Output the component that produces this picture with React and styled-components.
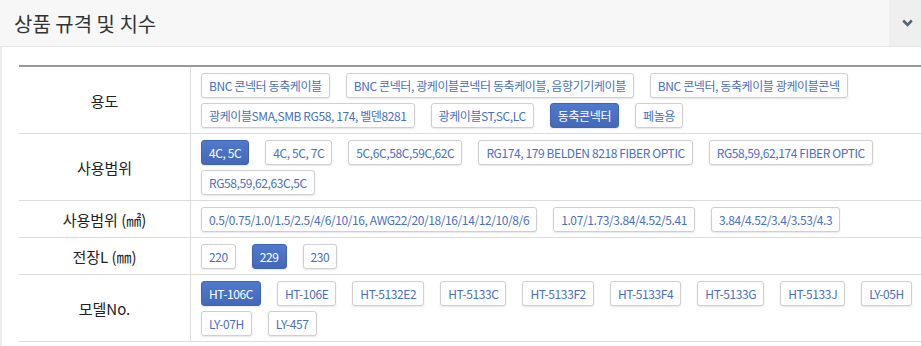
import React from 'react'
import styled, { createGlobalStyle } from 'styled-components'

const specs = [
  {
    label: '용도',
    options: [
      'BNC 콘넥터 동축케이블',
      'BNC 콘넥터, 광케이블콘넥터 동축케이블, 음향기기케이블',
      'BNC 콘넥터, 동축케이블 광케이블콘넥',
      '광케이블SMA,SMB RG58, 174, 벨덴8281',
      '광케이블ST,SC,LC',
      '동축콘넥터',
      '페놀용'
    ],
    active: '동축콘넥터'
  },
  {
    label: '사용범위',
    options: [
      '4C, 5C',
      '4C, 5C, 7C',
      '5C,6C,58C,59C,62C',
      'RG174, 179 BELDEN 8218 FIBER OPTIC',
      'RG58,59,62,174 FIBER OPTIC',
      'RG58,59,62,63C,5C'
    ],
    active: '4C, 5C'
  },
  {
    label: '사용범위 (㎟)',
    options: [
      '0.5/0.75/1.0/1.5/2.5/4/6/10/16, AWG22/20/18/16/14/12/10/8/6',
      '1.07/1.73/3.84/4.52/5.41',
      '3.84/4.52/3.4/3.53/4.3'
    ]
  },
  {
    label: '전장L (㎜)',
    options: ['220', '229', '230'],
    active: '229'
  },
  {
    label: '모델No.',
    options: [
      'HT-106C',
      'HT-106E',
      'HT-5132E2',
      'HT-5133C',
      'HT-5133F2',
      'HT-5133F4',
      'HT-5133G',
      'HT-5133J',
      'LY-05H',
      'LY-07H',
      'LY-457'
    ],
    active: 'HT-106C'
  }
]

const App = () => (
  <>
    <GlobalStyle />
    <Header>
      <Title>상품 규격 및 치수</Title>
      <Toggle>
        <svg width="11" height="8" viewBox="0 0 11 8">
          <path d="M1.2 1.5 L5.5 5.8 L9.8 1.5" fill="none" stroke="#56636f" strokeWidth="2.6" />
        </svg>
      </Toggle>
    </Header>
    <Panel>
      <Table>
        {specs.map(spec => (
          <Row key={spec.label}>
            <Label>{spec.label}</Label>
            <Options>
              {spec.options.map(opt => (
                <Option key={opt} active={opt === spec.active}>
                  {opt}
                </Option>
              ))}
            </Options>
          </Row>
        ))}
      </Table>
    </Panel>
  </>
)

const GlobalStyle = createGlobalStyle`
  body {
    margin: 0;
    background: #fff;
    font-family: "Noto Sans CJK KR", "Noto Sans", sans-serif;
    overflow: hidden;
  }
`

const Header = styled.div`
  display: flex;
  align-items: stretch;
  height: 46px;
  background: #f7f7f7;
  border-bottom: 1px solid #e6e6e6;
`

const Title = styled.div`
  flex: 1;
  display: flex;
  align-items: center;
  padding-left: 14px;
  font-size: 20px;
  color: #333;
`

const Toggle = styled.div`
  width: 28px;
  display: flex;
  align-items: center;
  justify-content: center;
  padding-left: 4px;
  background: #efefef;
`

const Panel = styled.div`
  border-left: 2px solid #ececec;
  padding: 18px 0 0 17px;
  height: 300px;
`

const Table = styled.div`
  border-top: 2px solid #999;
  width: 920px;
`

const Row = styled.div`
  display: grid;
  grid-template-columns: 172px 1fr;
  border-bottom: 1px solid #dcdcdc;
`

const Label = styled.div`
  display: flex;
  align-items: center;
  justify-content: center;
  border-right: 1px solid #dcdcdc;
  font-size: 15px;
  color: #222;
`

const Options = styled.div`
  display: flex;
  flex-wrap: wrap;
  gap: 5px 16px;
  padding: 6px 0 5px 10px;
`

const Option = styled.button`
  height: 25px;
  padding: 0 7px;
  border: 1px solid ${props => (props.active ? '#3f66b6' : '#cfcfcf')};
  border-radius: 3px;
  background: ${props => (props.active ? 'linear-gradient(#5079cc, #4468b8)' : '#fff')};
  color: ${props => (props.active ? '#fff' : '#4a6ec4')};
  box-shadow: 0 1px 2px rgba(0, 0, 0, 0.1);
  font-family: "Noto Sans CJK KR", "Noto Sans", sans-serif;
  font-size: 12px;
  letter-spacing: -0.4px;
  white-space: nowrap;
  cursor: pointer;
`

export default App
